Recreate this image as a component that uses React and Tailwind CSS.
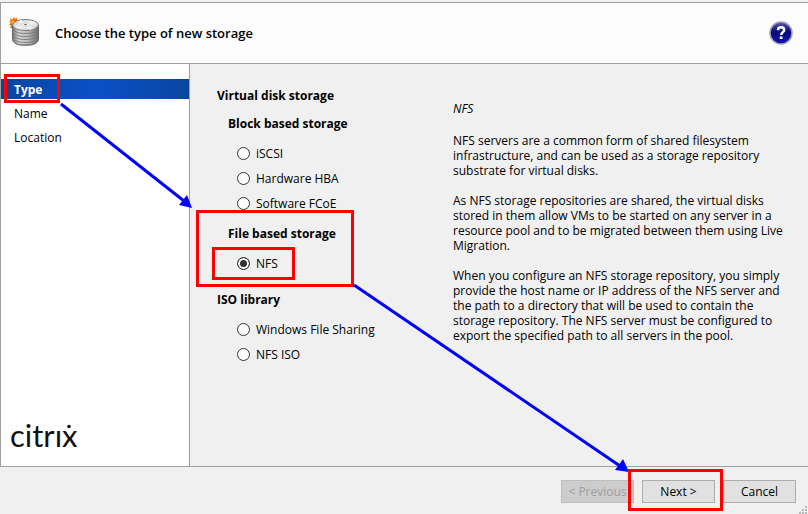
import React, { useState } from "react";

const STEPS = ["Type", "Name", "Location"];

function StorageIcon() {
  const rows = [18, 21, 24, 27, 30];
  return (
    <svg width="32" height="32" viewBox="0 0 32 32" aria-hidden="true">
      <defs>
        <linearGradient id="side" x1="0" x2="1">
          <stop offset="0" stopColor="#777" />
          <stop offset="0.25" stopColor="#d8d8d8" />
          <stop offset="0.6" stopColor="#b8b8b8" />
          <stop offset="1" stopColor="#6c6c6c" />
        </linearGradient>
        <linearGradient id="disc" x1="0" x2="1" y1="0" y2="1">
          <stop offset="0" stopColor="#bdbdbd" />
          <stop offset="0.5" stopColor="#f4f4f4" />
          <stop offset="1" stopColor="#bcbcbc" />
        </linearGradient>
      </defs>
      <path d="M2 1l2.500 1.500L6 0l1 2L9 .5v3l2-.5-1 4-1 3-4 1-3 0 1-2.500-2-1 2-1.500-2-2 2-.5z" fill="#f26a00" />
      <circle cx="5" cy="5" r="1.500" fill="#ffc21c" />
      <path d="M4.500 8v14.500c0 3.200 5.500 5.500 13 5.500S30.500 25.700 30.500 22.500V8z" fill="url(#side)" stroke="#666" />
      {rows.map((y) => (
        <path key={y} d={`M5 ${y - 6}c2 3.500 7 4.500 12.500 4.500s10.500-1 12.500-4.500`} fill="none" stroke="#7b7b7b" />
      ))}
      <ellipse cx="17.500" cy="8" rx="13" ry="5.500" fill="url(#disc)" stroke="#777" />
      <path d="M17.500 8L8.500 4.500 13.500 3z M17.500 8l9 3.500-5 1.300z" fill="#fff" opacity=".7" />
      <ellipse cx="17.500" cy="7.500" rx="4" ry="1.800" fill="#f4f4f4" stroke="#c4c4c4" strokeWidth=".7" />
      <ellipse cx="17.500" cy="7.500" rx="1.400" ry=".8" fill="#666" />
    </svg>
  );
}

function HelpIcon() {
  return (
    <svg width="24" height="24" viewBox="0 0 24 24" aria-hidden="true">
      <defs>
        <linearGradient id="help" x1="0" x2="0" y1="0" y2="1">
          <stop offset="0" stopColor="#5a5ab0" />
          <stop offset="0.45" stopColor="#08087e" />
          <stop offset="1" stopColor="#1414b4" />
        </linearGradient>
      </defs>
      <circle cx="12" cy="12" r="11" fill="url(#help)" stroke="#a2a2ae" strokeWidth="1.500" />
      <path d="M9 9.200C9 7 10.300 6.200 12 6.200s3.200 1 3.200 2.700c0 2.300-3 2.300-3 5" fill="none" stroke="#fff" strokeWidth="2.400" />
      <rect x="10.800" y="15.500" width="2.700" height="2.500" fill="#fff" />
    </svg>
  );
}

function CitrixLogo() {
  return (
    <svg width="80" height="44" viewBox="0 0 80 44" role="img" aria-label="citrix">
      <text x="1" y="32" fontFamily="Lato, sans-serif" fontSize="31" fill="#111">citrıx</text>
      <circle cx="60" cy="11.500" r="1.800" fill="#111" />
    </svg>
  );
}

function Heading({ children, nested }) {
  return (
    <h2 className={`flex h-7 items-center text-[12px] font-bold ${nested ? "pl-[11px]" : ""}`}>{children}</h2>
  );
}

function Options({ items, value, onChange }) {
  return (
    <ul className="mt-1 pl-5">
      {items.map((item) => (
        <li key={item}>
          <label className="flex h-[25px] items-center gap-1.5">
            <input
              type="radio"
              name="storage"
              checked={value === item}
              onChange={() => onChange(item)}
              className="size-[13px] shrink-0 appearance-none rounded-full border border-[#333] bg-white checked:bg-[#333] checked:shadow-[inset_0_0_0_2px_white]"
            />
            {item}
          </label>
        </li>
      ))}
    </ul>
  );
}

function Annotations() {
  return (
    <svg className="pointer-events-none absolute left-0 top-0" width="808" height="514" viewBox="0 0 808 514" aria-hidden="true">
      <g stroke="#00f" strokeWidth="3" fill="#00f">
        <path d="M61 104L184 201M354 285L620 466" fill="none" />
        <path d="M192 208L179 205L187 195ZM629 472L615 470L623 459Z" stroke="none" />
      </g>
      <g fill="none" stroke="#f00" strokeWidth="3">
        <rect x="5.500" y="75.500" width="53" height="26" />
        <rect x="197.500" y="211.500" width="155" height="74" />
        <rect x="213.500" y="248.500" width="80" height="30" />
        <rect x="629.500" y="470.500" width="92" height="39" />
      </g>
    </svg>
  );
}

function SizeGrip() {
  const dots = [[6, 0], [3, 3], [6, 3], [0, 6], [3, 6], [6, 6]];
  return (
    <svg className="absolute bottom-0 right-0" width="9" height="8" viewBox="0 0 9 8" aria-hidden="true">
      {dots.map(([x, y]) => (
        <rect key={`${x}-${y}`} x={x} y={y} width="2" height="2" fill="#b8b8b8" />
      ))}
    </svg>
  );
}

const BUTTON = "h-[23px] w-[73px] whitespace-nowrap border border-[#adadad] bg-[#e1e1e1] disabled:border-[#bfbfbf] disabled:bg-[#ccc] disabled:text-[#a0a0a0]";

export default function App() {
  const [type, setType] = useState("NFS");
  return (
    <div className="relative flex min-h-screen flex-col bg-[#f0f0f0] pt-[2px] font-['Open_Sans','Noto_Sans',sans-serif] text-[12px] leading-[15px] text-black">
      <header className="flex h-[62px] items-center border border-r-0 border-[#a0a0a0] bg-[#fcfcfc] pl-[7px] pr-[15px]">
        <StorageIcon />
        <h1 className="ml-[15px] flex-1 text-[13px] font-semibold">Choose the type of new storage</h1>
        <button type="button" aria-label="Help">
          <HelpIcon />
        </button>
      </header>
      <div className="flex flex-1 border-b border-l border-[#a0a0a0]">
        <nav className="flex w-[189px] shrink-0 flex-col border-r border-[#a0a0a0] bg-white pt-[15px]">
          <ol className="flex flex-1 flex-col gap-1">
            {STEPS.map((step, i) => (
              <li
                key={step}
                className={`flex h-5 items-center pl-[13px] ${i === 0 ? "bg-linear-to-r from-[#0a46a0] via-[#0a50c8] to-[#0a46a0] text-[12px] font-bold text-white" : ""}`}
              >
                {step}
              </li>
            ))}
          </ol>
          <div className="pb-[7px] pl-2">
            <CitrixLogo />
          </div>
        </nav>
        <main className="flex flex-1 pl-[27px] pt-[17px]">
          <form className="w-[236px] shrink-0">
            <Heading>Virtual disk storage</Heading>
            <Heading nested>Block based storage</Heading>
            <Options items={["iSCSI", "Hardware HBA", "Software FCoE"]} value={type} onChange={setType} />
            <div className="pt-[3px]">
              <Heading nested>File based storage</Heading>
              <Options items={["NFS"]} value={type} onChange={setType} />
            </div>
            <div className="pt-[9px]">
              <Heading>ISO library</Heading>
              <Options items={["Windows File Sharing", "NFS ISO"]} value={type} onChange={setType} />
            </div>
          </form>
          <section className="flex flex-1 flex-col gap-[15px] pr-5 pt-5">
            <h2 className="mb-[2px] italic">NFS</h2>
            <p>
              NFS servers are a common form of shared filesystem infrastructure, and can be used as a storage
              repository substrate for virtual disks.
            </p>
            <p>
              As NFS storage repositories are shared, the virtual disks stored in them allow VMs to be started on any
              server in a resource pool and to be migrated between them using Live Migration.
            </p>
            <p>
              When you configure an NFS storage repository, you simply provide the host name or IP address of the NFS
              server and the path to a directory that will be used to contain the storage repository. The NFS server
              must be configured to export the specified path to all servers in the pool.
            </p>
          </section>
        </main>
      </div>
      <footer className="flex h-[47px] justify-end gap-2 pr-3 pt-[13px]">
        <button type="button" disabled className={BUTTON}>&lt; Previous</button>
        <button type="button" className={BUTTON}>Next &gt;</button>
        <button type="button" className={BUTTON}>Cancel</button>
      </footer>
      <SizeGrip />
      <Annotations />
    </div>
  );
}
